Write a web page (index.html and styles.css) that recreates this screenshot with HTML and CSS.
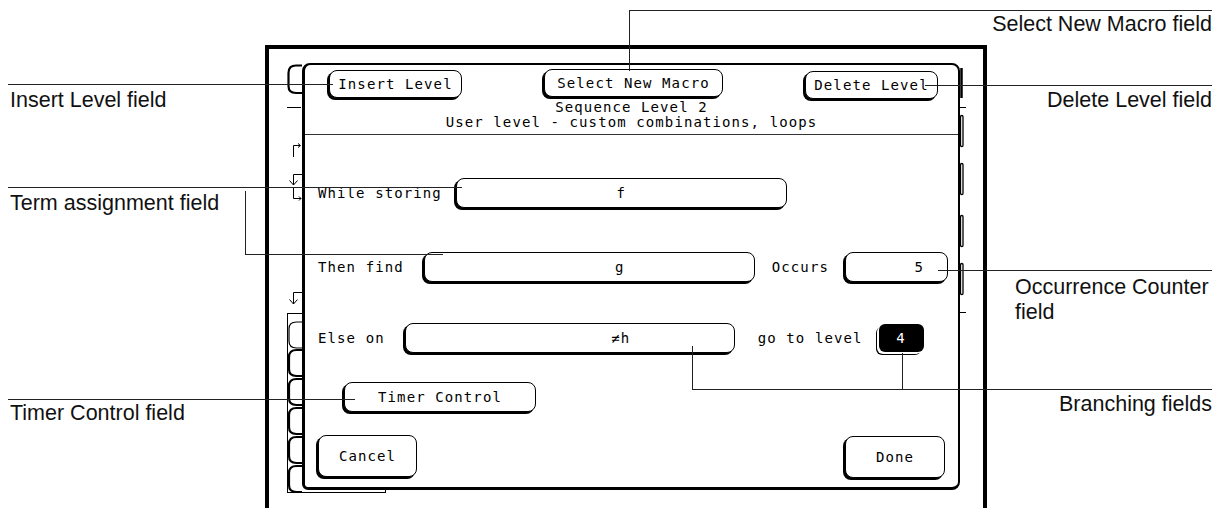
FILE: index.html
```html
<!DOCTYPE html>
<html lang="en">
<head>
<meta charset="utf-8">
<title>Sequence Level dialog</title>
<link rel="stylesheet" href="styles.css">
</head>
<body>
<div class="page">
  <div class="frame">
    <div class="backdrop">
      <svg class="strip-left" width="121" height="451" viewBox="0 0 121 451" fill="none" stroke="#000">
        <path d="M33 16.5H27Q19.5 16.5 19.5 24V37Q19.5 44 27 44H33" stroke-width="2.2"/>
        <path d="M18 58.5H32" stroke-width="1"/>
        <path d="M24.5 108V96.5H31M29 94.5L31.5 96.5L29 98.5" stroke-width="1"/>
        <path d="M33 125.5H24.5V136M20.5 131.5L24.5 136L28.5 131.5" stroke-width="1"/>
        <path d="M24.5 138V149.5H32M30 147.5L32 149.5L30 151.5" stroke-width="1"/>
        <path d="M33 243.5H24.5V255M20.5 250.5L24.5 255L28.5 250.5" stroke-width="1"/>
        <rect x="18.5" y="264.5" width="98" height="179" stroke-width="1"/>
        <path d="M33 273H27.5Q20 273 20 280V292Q20 299 27.5 299H33" stroke-width="1.2"/>
        <path d="M33 301H27.5Q20 301 20 308V320Q20 327 27.5 327H33" stroke-width="2.2"/>
        <path d="M33 330H27.5Q20 330 20 337V349Q20 356 27.5 356H33" stroke-width="2.2"/>
        <path d="M33 359H27.5Q20 359 20 366V378Q20 385 27.5 385H33" stroke-width="2.2"/>
        <path d="M33 388H27.5Q20 388 20 395V407Q20 414 27.5 414H33" stroke-width="2.2"/>
        <path d="M33 417H27.5Q20 417 20 424V436Q20 443 27.5 443H33" stroke-width="2.2"/>
      </svg>
      <svg class="strip-right" width="10" height="260" viewBox="0 0 10 260" fill="none" stroke="#000">
        <path d="M4.5 5V35" stroke-width="2.5"/>
        <path d="M3 44.5H9" stroke-width="1"/>
        <rect x="3.5" y="52.5" width="2.5" height="31" rx="1.2" stroke-width="1.3"/>
        <rect x="3.5" y="100.5" width="2.5" height="31" rx="1.2" stroke-width="1.3"/>
        <rect x="3.5" y="152.5" width="2.5" height="31" rx="1.2" stroke-width="1.3"/>
        <rect x="3.5" y="200.5" width="2.5" height="31" rx="1.2" stroke-width="1.3"/>
        <path d="M3 249.5H9" stroke-width="1"/>
      </svg>
    </div>
    <div class="dialog">
      <div class="dlg-top">
        <div class="btn btn-insert">Insert Level</div>
        <div class="btn btn-macro">Select New Macro</div>
        <div class="btn btn-delete">Delete Level</div>
      </div>
      <div class="dlg-title">Sequence Level 2<br>User level - custom combinations, loops</div>
      <div class="dlg-body">
        <div class="row row-store">
          <span class="lbl">While storing</span>
          <span class="field field-store">f</span>
        </div>
        <div class="row row-find">
          <span class="lbl">Then find</span>
          <span class="field field-find">g</span>
          <span class="lbl lbl-occurs">Occurs</span>
          <span class="field field-count">5</span>
        </div>
        <div class="row row-else">
          <span class="lbl">Else on</span>
          <span class="field field-else">≠h</span>
          <span class="lbl lbl-goto">go to level</span>
          <span class="field-dark">4</span>
        </div>
        <div class="row row-timer">
          <span class="btn btn-timer">Timer Control</span>
        </div>
        <div class="row row-actions">
          <span class="btn btn-cancel">Cancel</span>
          <span class="btn btn-done">Done</span>
        </div>
      </div>
    </div>
  </div>

  <div class="callouts">
    <div class="callout co-macro">Select New Macro field</div>
    <div class="callout co-insert">Insert Level field</div>
    <div class="callout co-delete">Delete Level field</div>
    <div class="callout co-term">Term assignment field</div>
    <div class="leader ld-term"></div>
    <div class="callout co-occur">Occurrence Counter field</div>
    <div class="leader ld-else"></div>
    <div class="leader ld-level"></div>
    <div class="callout co-branch">Branching fields</div>
    <div class="callout co-timer">Timer Control field</div>
  </div>
</div>
</body>
</html>
```

FILE: styles.css
```css
* { box-sizing: border-box; }

html, body {
  margin: 0;
  background: #fff;
}

.page {
  position: relative;
  width: 1218px;
  height: 508px;
  overflow: hidden;
  padding: 45px 0 0 265px;
  font-family: "DejaVu Sans Mono", "Liberation Mono", monospace;
  font-size: 14px;
  letter-spacing: 1.1px;
  color: #000;
}

/* outer instrument screen */
.frame {
  width: 722px;
  height: 480px;
  border: 4px solid #000;
  border-bottom: 0;
  display: grid;
}

.backdrop,
.dialog {
  grid-area: 1 / 1;
}

.backdrop {
  display: flex;
  justify-content: space-between;
  align-items: flex-start;
}

.strip-left { display: block; }

.strip-right {
  display: block;
  margin: 14px 16px 0 0;
}

/* pop-up dialog */
.dialog {
  justify-self: start;
  align-self: start;
  margin: 14px 0 0 33px;
  width: 658px;
  height: 427px;
  border: 2px solid #000;
  border-left-width: 3px;
  border-bottom-width: 3px;
  border-radius: 8px 8px 8px 6px;
  background: #fff;
  display: flex;
  flex-direction: column;
}

.dlg-top {
  flex: none;
  display: flex;
  justify-content: space-between;
  align-items: flex-start;
  height: 35px;
  padding: 5px 20px 0 24px;
}

.btn {
  flex: none;
  display: flex;
  align-items: center;
  justify-content: center;
  height: 28px;
  border: 1px solid #000;
  border-radius: 8px;
  box-shadow: -2px 2px 0 #000;
  background: #fff;
  white-space: nowrap;
}

.btn-insert { width: 133px; }
.btn-macro { width: 179px; margin-top: -1px; }
.btn-delete { width: 133px; margin-top: 1px; }

.dlg-title {
  flex: none;
  text-align: center;
  line-height: 15px;
  padding-bottom: 4px;
  border-bottom: 1px solid #333;
}

.dlg-body {
  display: flex;
  flex-direction: column;
}

.row {
  flex: none;
  display: flex;
  align-items: center;
  height: 30px;
  padding-left: 13px;
  white-space: nowrap;
}

.row-store { margin-top: 43px; }
.row-find { margin-top: 44px; }
.row-else { margin-top: 41px; }
.row-timer { margin-top: 29px; padding-left: 39px; }
.row-actions {
  margin-top: 23px;
  height: 43px;
  align-items: flex-start;
  justify-content: space-between;
  padding: 0 13px;
}

.field {
  flex: none;
  height: 30px;
  line-height: 28px;
  border: 1px solid #000;
  border-radius: 8px;
  box-shadow: -2px 2px 0 #000;
  background: #fff;
  text-align: center;
  white-space: nowrap;
}

.field-store { width: 331px; margin-left: 14px; }
.field-find { width: 331px; margin-left: 20px; padding-left: 61px; }
.field-else { width: 330px; margin-left: 20px; padding-left: 102px; }

.lbl-occurs { margin-left: 17px; }
.field-count {
  width: 103px;
  margin-left: 16px;
  text-align: right;
  padding-right: 23px;
}

.lbl-goto { margin-left: 23px; }

.field-dark {
  flex: none;
  width: 45px;
  height: 28px;
  line-height: 28px;
  margin-left: 16px;
  background: #000;
  color: #fff;
  border-radius: 6px;
  text-align: center;
  box-shadow: -2px 2px 0 #fff, -3px 3px 0 #000;
}

.btn-timer { width: 192px; height: 30px; }
.btn-cancel { width: 99px; height: 42px; }
.btn-done { width: 100px; height: 42px; margin-top: 1px; }

/* annotation callouts over the figure */
.callouts {
  position: absolute;
  inset: 0;
  pointer-events: none;
  font-family: "Liberation Sans", Arial, sans-serif;
  font-size: 21.5px;
  line-height: 24px;
  letter-spacing: 0;
  color: #111;
}

.callout {
  position: absolute;
  border-top: 1px solid #222;
  padding-top: 3px;
  white-space: nowrap;
}

.co-macro {
  left: 629px;
  top: 10px;
  width: 583px;
  height: 61px;
  border-left: 1px solid #222;
  text-align: right;
  padding-top: 1px;
}

.co-insert { left: 8px; top: 84px; width: 325px; padding-left: 2px; }
.co-term { left: 8px; top: 187px; width: 454px; padding-left: 2px; }
.co-timer { left: 8px; top: 399px; width: 347px; padding-left: 2px; padding-top: 1px; }

.co-delete { left: 925px; top: 85px; width: 287px; text-align: right; padding-top: 2px; }

.co-occur {
  left: 938px;
  top: 270px;
  width: 274px;
  padding: 4px 0 0 77px;
  line-height: 25px;
  white-space: normal;
}

.co-branch { left: 692px; top: 389px; width: 520px; text-align: right; padding-top: 2px; }

.leader {
  position: absolute;
  border-left: 1px solid #222;
}

.ld-term {
  left: 245px;
  top: 191px;
  width: 198px;
  height: 64px;
  border-bottom: 1px solid #222;
}

.ld-else { left: 692px; top: 346px; height: 43px; }
.ld-level { left: 902px; top: 353px; height: 36px; }
```
